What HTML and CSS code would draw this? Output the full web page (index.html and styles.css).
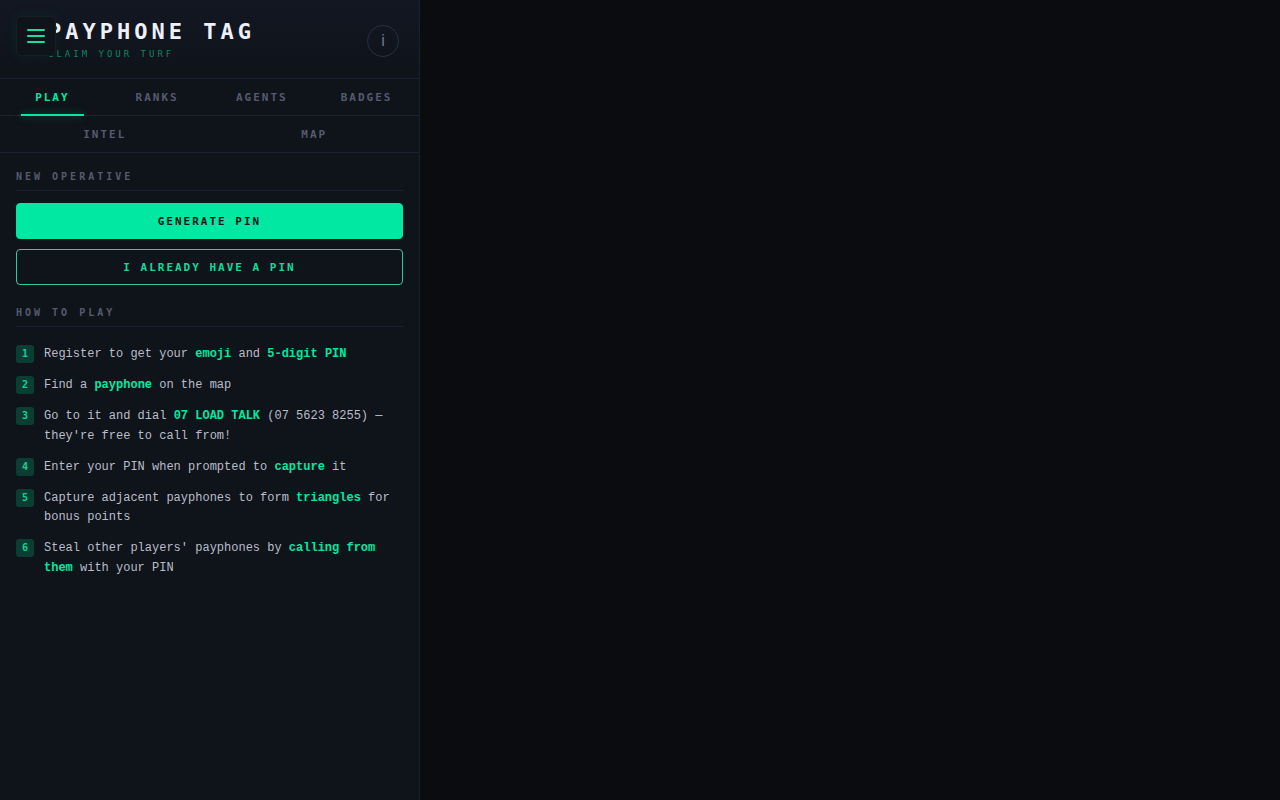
FILE: index.html
```html
<!DOCTYPE html>
<html lang="en">
<head>
    <meta charset="UTF-8">
    <meta name="viewport" content="width=device-width, initial-scale=1.0">
    <title>Payphone Tag</title>
    <link rel="stylesheet" href="styles.css">
</head>
<body>
    <button class="menu-toggle" type="button" aria-label="Toggle menu">
        <svg width="20" height="20" viewBox="0 0 20 20" fill="none" stroke="currentColor" stroke-width="2" stroke-linecap="round">
            <path d="M2 4h16M2 10h16M2 16h16"/>
        </svg>
    </button>
    <div class="app">
        <aside class="sidebar">
            <header class="header">
                <div class="brand">
                    <h1 class="title">PAYPHONE TAG</h1>
                    <p class="tagline">CLAIM YOUR TURF</p>
                </div>
                <button class="info-btn" type="button" aria-label="About">i</button>
            </header>
            <nav class="tabs">
                <button class="tab active" type="button">PLAY</button>
                <button class="tab" type="button">RANKS</button>
                <button class="tab" type="button">AGENTS</button>
                <button class="tab" type="button">BADGES</button>
                <button class="tab" type="button">INTEL</button>
                <button class="tab" type="button">MAP</button>
            </nav>
            <div class="panel">
                <section class="section">
                    <h2 class="section-title">NEW OPERATIVE</h2>
                    <div class="actions">
                        <button class="btn btn-primary" type="button">GENERATE PIN</button>
                        <button class="btn btn-outline" type="button">I ALREADY HAVE A PIN</button>
                    </div>
                </section>
                <section class="section">
                    <h2 class="section-title">HOW TO PLAY</h2>
                    <ol class="steps">
                        <li class="step"><span class="step-num">1</span><span>Register to get your <strong>emoji</strong> and <strong>5-digit PIN</strong></span></li>
                        <li class="step"><span class="step-num">2</span><span>Find a <strong>payphone</strong> on the map</span></li>
                        <li class="step"><span class="step-num">3</span><span>Go to it and dial <strong>07 LOAD TALK</strong> (07 5623 8255) — they're free to call from!</span></li>
                        <li class="step"><span class="step-num">4</span><span>Enter your PIN when prompted to <strong>capture</strong> it</span></li>
                        <li class="step"><span class="step-num">5</span><span>Capture adjacent payphones to form <strong>triangles</strong> for bonus points</span></li>
                        <li class="step"><span class="step-num">6</span><span>Steal other players' payphones by <strong>calling from them</strong> with your PIN</span></li>
                    </ol>
                </section>
            </div>
        </aside>
        <main class="map"></main>
    </div>
</body>
</html>
```
FILE: styles.css
```css
:root {
    --bg: #0a0c0f;
    --panel: #0f131a;
    --border: #1c212d;
    --accent: #00e8a2;
    --muted: #555b6e;
    --text: #b9bec9;
    --display: "DejaVu Sans Mono", monospace;
}

* {
    box-sizing: border-box;
    margin: 0;
    padding: 0;
}

body {
    background: var(--bg);
    color: var(--text);
    font-family: "Liberation Mono", monospace;
    font-size: 12px;
}

button {
    font-family: var(--display);
    border: none;
    background: none;
    cursor: pointer;
}

.app {
    display: flex;
    min-height: 100vh;
}

.sidebar {
    width: 420px;
    max-width: 100%;
    flex-shrink: 0;
    background: var(--panel);
    border-right: 1px solid var(--border);
}

.map {
    flex: 1;
}

/* Floats over the sidebar header */
.menu-toggle {
    position: fixed;
    top: 16px;
    left: 16px;
    z-index: 10;
    display: flex;
    align-items: center;
    justify-content: center;
    width: 40px;
    height: 40px;
    background: var(--panel);
    border: 1px solid #191d28;
    border-radius: 4px;
    color: #1fdc9f;
    box-shadow: 0 0 16px rgba(0, 232, 162, .06);
}

.header {
    display: flex;
    justify-content: space-between;
    align-items: center;
    padding: 18px 20px 16px 48px;
    background: linear-gradient(180deg, #121722, var(--panel));
    border-bottom: 1px solid var(--border);
}

.title {
    font-family: var(--display);
    font-size: 22px;
    line-height: 28px;
    letter-spacing: 4px;
    color: #edf0fa;
}

.tagline {
    font-family: var(--display);
    font-size: 9px;
    line-height: 16px;
    letter-spacing: 3px;
    color: #0b8560;
}

.brand {
    height: 44px;
}

.info-btn {
    width: 32px;
    height: 32px;
    margin-top: 2px;
    border: 1px solid #2a2f42;
    border-radius: 50%;
    color: #737a8e;
    font-family: "Liberation Sans", sans-serif;
    font-size: 16px;
}

.tabs {
    display: flex;
    flex-wrap: wrap;
}

.tab {
    position: relative;
    flex: 1 0 25%;
    height: 37px;
    border-bottom: 1px solid var(--border);
    color: var(--muted);
    font-size: 11px;
    font-weight: 700;
    letter-spacing: 2px;
}

.tab.active {
    color: var(--accent);
}

.tab.active::after {
    content: "";
    position: absolute;
    left: 20%;
    right: 20%;
    bottom: -1px;
    height: 2px;
    background: var(--accent);
    box-shadow: 0 0 8px rgba(0, 232, 162, .4);
}

.panel {
    display: flex;
    flex-direction: column;
    gap: 20px;
    padding: 16px;
}

.section-title {
    margin-bottom: 12px;
    padding-bottom: 6px;
    border-bottom: 1px solid var(--border);
    color: var(--muted);
    font-family: var(--display);
    font-size: 10px;
    line-height: 15px;
    letter-spacing: 3px;
}

.actions {
    display: flex;
    flex-direction: column;
    gap: 10px;
}

.btn {
    height: 36px;
    border: 1px solid var(--accent);
    border-radius: 4px;
    font-size: 11px;
    font-weight: 700;
    letter-spacing: 2px;
}

.btn-primary {
    background: var(--accent);
    color: #0a1512;
}

.btn-outline {
    border-color: #2fc99a;
    color: #14d99b;
}

.steps {
    list-style: none;
}

.step {
    display: flex;
    gap: 10px;
    padding: 6px 0;
    line-height: 1.6;
}

.step strong {
    color: var(--accent);
}

.step-num {
    flex-shrink: 0;
    width: 18px;
    height: 18px;
    border-radius: 3px;
    background: #0c3d33;
    color: #19cf97;
    font-family: var(--display);
    font-size: 10px;
    font-weight: 700;
    line-height: 18px;
    text-align: center;
}
```
